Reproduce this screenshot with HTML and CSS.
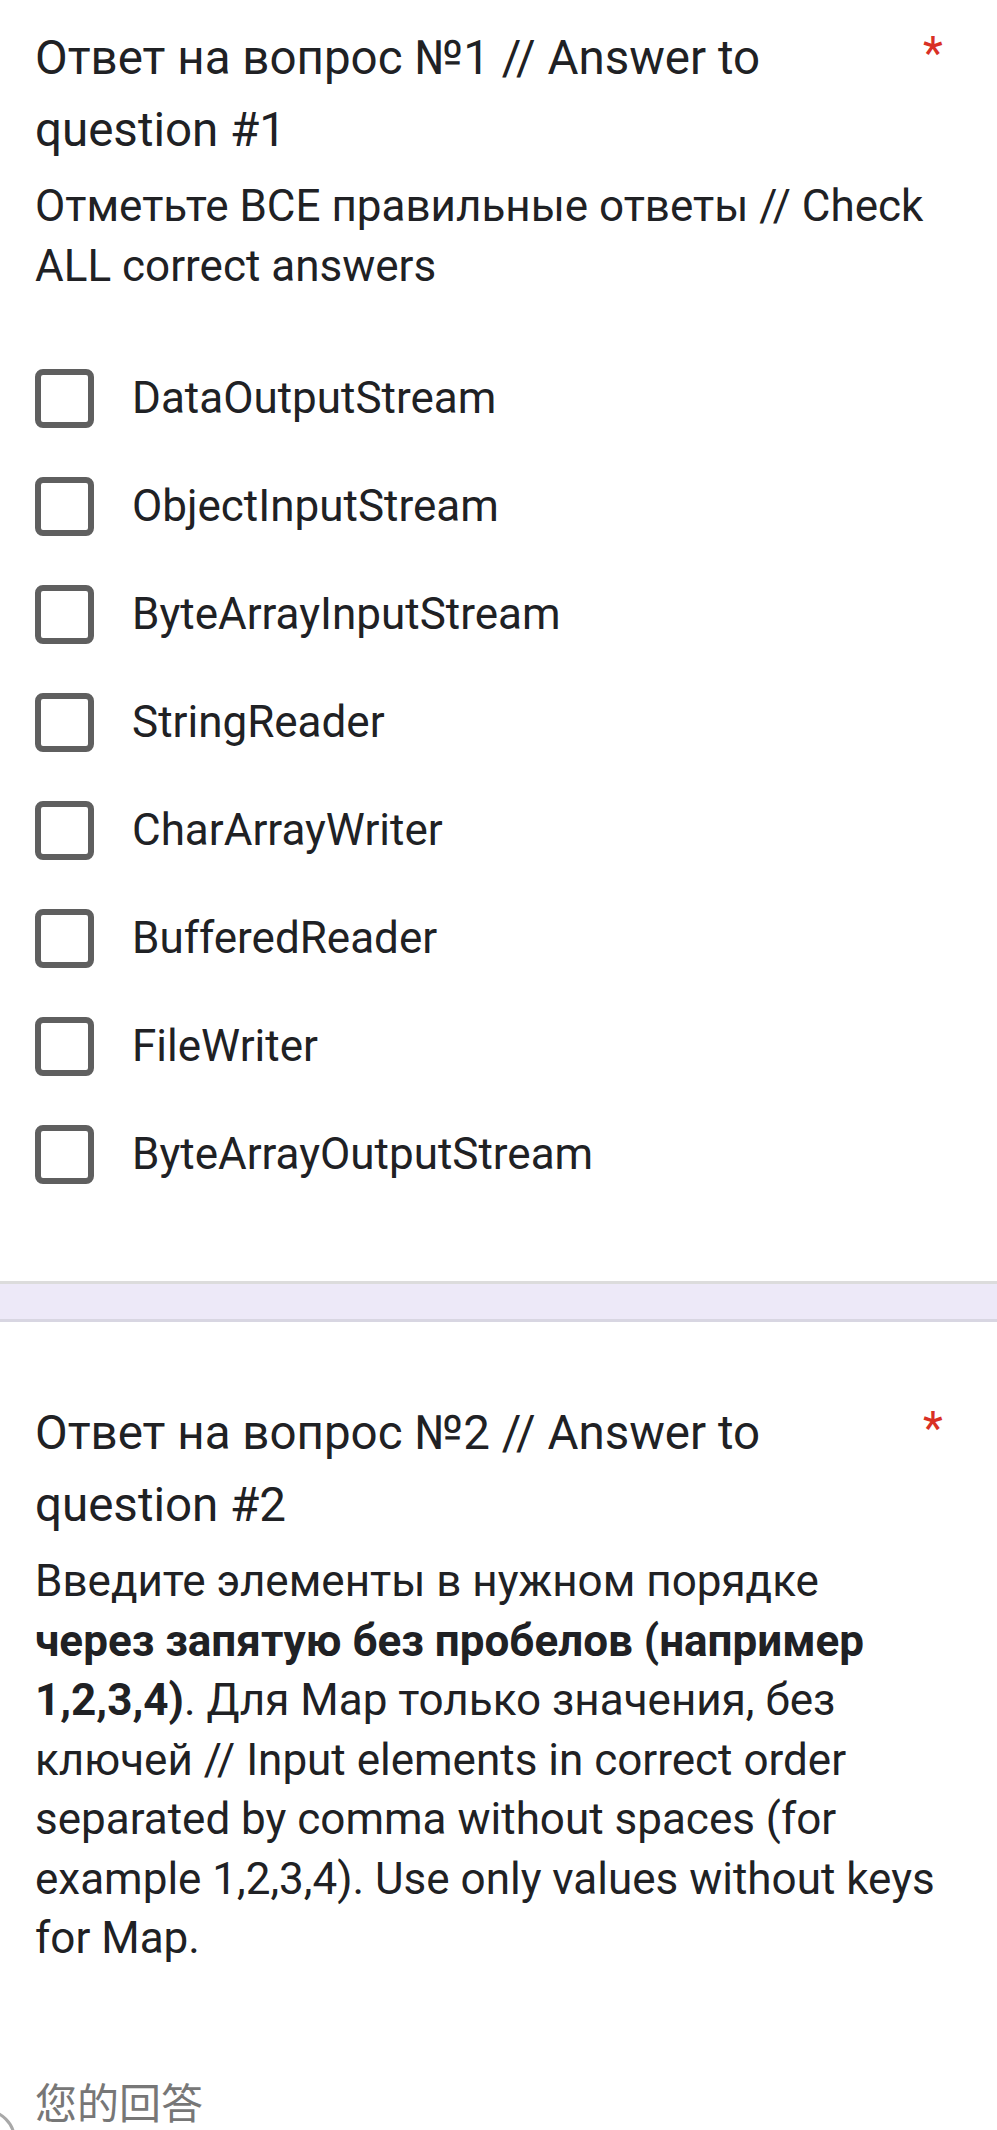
FILE: index.html
```html
<!DOCTYPE html>
<html lang="ru">
<head>
<meta charset="utf-8">
<title>Form</title>
<link rel="stylesheet" href="styles.css">
</head>
<body>
<div class="page">
  <section class="question q1">
    <div class="q-head">
      <div class="q-title">Ответ на вопрос №1 // Answer to question #1</div>
      <span class="required">*</span>
    </div>
    <div class="q-desc">Отметьте ВСЕ правильные ответы // Check ALL correct answers</div>
    <ul class="options">
      <li class="option"><span class="box"></span><span class="label">DataOutputStream</span></li>
      <li class="option"><span class="box"></span><span class="label">ObjectInputStream</span></li>
      <li class="option"><span class="box"></span><span class="label">ByteArrayInputStream</span></li>
      <li class="option"><span class="box"></span><span class="label">StringReader</span></li>
      <li class="option"><span class="box"></span><span class="label">CharArrayWriter</span></li>
      <li class="option"><span class="box"></span><span class="label">BufferedReader</span></li>
      <li class="option"><span class="box"></span><span class="label">FileWriter</span></li>
      <li class="option"><span class="box"></span><span class="label">ByteArrayOutputStream</span></li>
    </ul>
  </section>
  <div class="separator"></div>
  <section class="question q2">
    <div class="q-head">
      <div class="q-title">Ответ на вопрос №2 // Answer to question #2</div>
      <span class="required">*</span>
    </div>
    <div class="q-desc">Введите элементы в нужном порядке <b>через запятую без пробелов (например 1,2,3,4)</b>. Для Map только значения, без ключей // Input elements in correct order separated by comma without spaces (for example 1,2,3,4). Use only values without keys for Map.</div>
    <div class="answer">您的回答</div>
  </section>
  <span class="corner-ring"></span>
</div>
</body>
</html>
```
FILE: styles.css
```css
html, body {
  margin: 0;
  padding: 0;
  background: #ffffff;
}
body {
  font-family: Roboto, "Noto Sans", "Noto Sans CJK SC", sans-serif;
  color: #202124;
}
.page {
  position: relative;
  width: 997px;
  height: 2130px;
  overflow: hidden;
}
.question {
  padding: 0 48px 0 35px;
}
.q1 {
  padding-top: 22px;
  padding-bottom: 73px;
}
.q2 {
  padding-top: 75px;
}
.q-head {
  display: flex;
  align-items: flex-start;
}
.q-title {
  flex: 1;
  font-size: 47.5px;
  line-height: 72px;
  padding-right: 40px;
}
.required {
  color: #d93025;
  font-size: 46px;
  line-height: 60px;
  margin-top: 1px;
  width: 26px;
  text-align: left;
}
.q-desc {
  margin-top: 11px;
  font-size: 44px;
  line-height: 59.5px;
}
.q-desc b {
  font-weight: 700;
}
.options {
  list-style: none;
  margin: 48px 0 0 0;
  padding: 0;
}
.option {
  display: flex;
  align-items: center;
  gap: 38px;
  height: 108px;
}
.box {
  box-sizing: border-box;
  width: 59px;
  height: 59px;
  border: 6px solid #5f5f5f;
  border-radius: 8px;
  flex: none;
}
.label {
  font-size: 44px;
}
.separator {
  height: 35px;
  background: #ede9f8;
  border-top: 3px solid #dcdcdc;
  border-bottom: 3px solid #d8d6e2;
}
.answer {
  margin-top: 104px;
  font-family: "Noto Sans CJK SC", sans-serif;
  font-size: 42px;
  line-height: 56px;
  color: #777777;
}
.corner-ring {
  position: absolute;
  left: -46px;
  top: 2109px;
  width: 62px;
  height: 62px;
  box-sizing: border-box;
  border: 3px solid #a8a8a8;
  border-radius: 50%;
}
```
